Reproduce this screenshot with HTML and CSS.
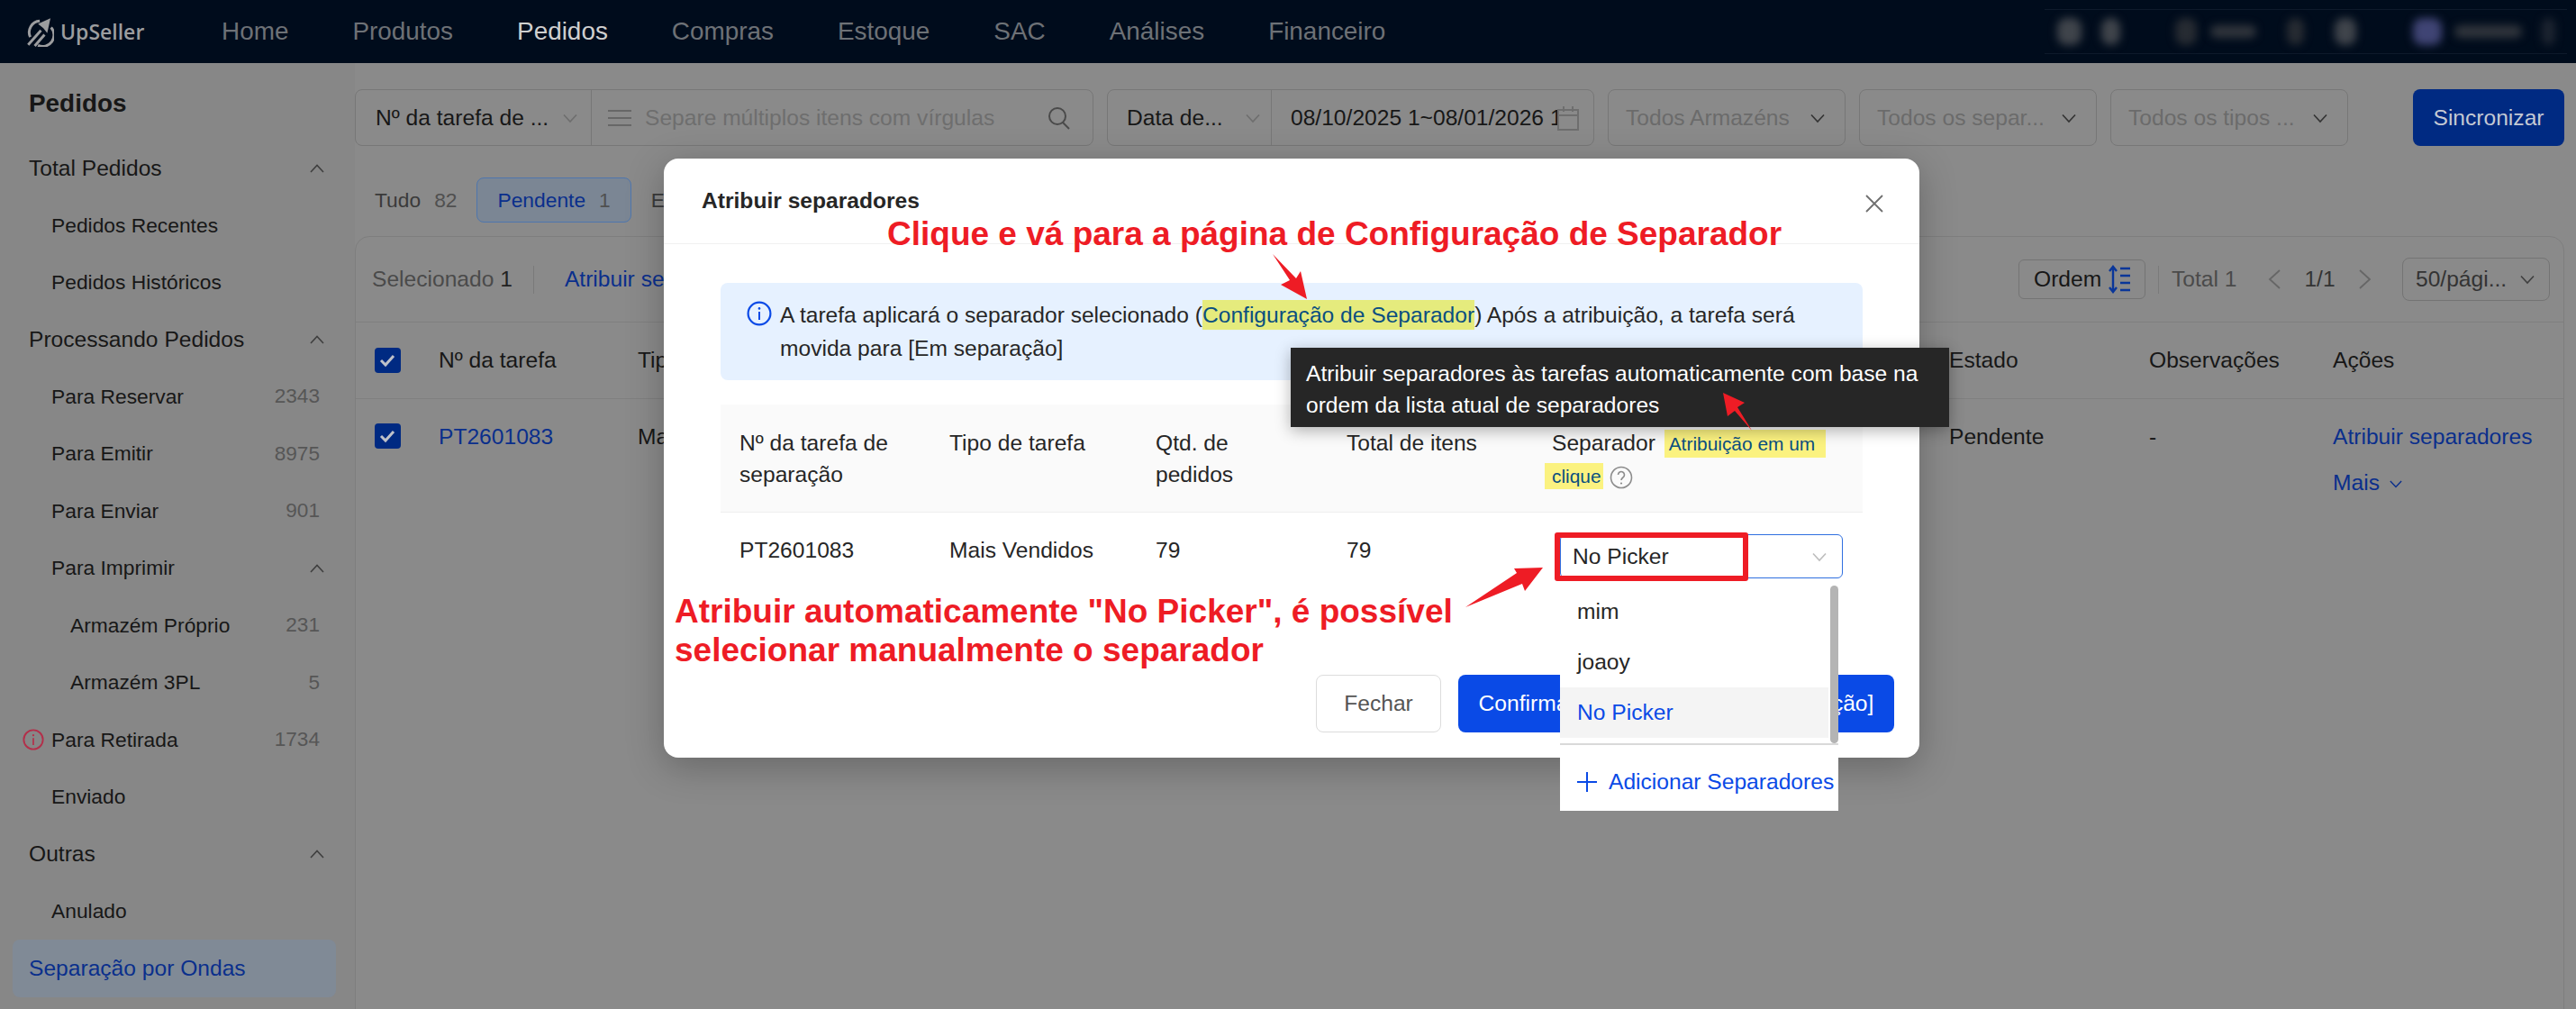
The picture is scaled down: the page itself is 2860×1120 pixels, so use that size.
FILE: index.html
```html
<!DOCTYPE html>
<html lang="pt">
  <head>
    <meta charset="utf-8">
    <title>Atribuir separadores</title>
    <link rel="stylesheet" href="styles.css">
  </head>
  <body>
    <svg class="icon-defs" width="0" height="0">
      <symbol id="chev-down" viewBox="0 0 16 16"><path d="M1 4.5 8 12l7-7.5" fill="none" stroke="currentColor" stroke-width="1.6"/></symbol>
      <symbol id="chev-up" viewBox="0 0 16 16"><path d="M1 12 8 4.5 15 12" fill="none" stroke="currentColor" stroke-width="1.6"/></symbol>
      <symbol id="chev-left" viewBox="0 0 16 24"><path d="M14 2 3 12l11 10" fill="none" stroke="currentColor" stroke-width="1.8"/></symbol>
      <symbol id="chev-right" viewBox="0 0 16 24"><path d="m2 2 11 10L2 22" fill="none" stroke="currentColor" stroke-width="1.8"/></symbol>
      <symbol id="info" viewBox="0 0 28 28"><circle cx="14" cy="14" r="12.4" fill="none" stroke="currentColor" stroke-width="2.2"/><path d="M14 12v9" stroke="currentColor" stroke-width="2"/><circle cx="14" cy="8.4" r="1.3" fill="currentColor"/></symbol>
    </svg>

    <header class="topbar">
      <div class="logo">
        <svg class="logo-mark" viewBox="20 25 100 100">
          <path d="M40 92A38 38 0 0 1 72 38M110 60A38 38 0 0 1 66 120" fill="none" stroke="currentColor" stroke-width="9"/>
          <path d="M108 29 66 48 84 62 97 79Z" fill="currentColor"/>
          <path d="M33 118 76 70M55 122 88 84" stroke="currentColor" stroke-width="9"/>
        </svg>
        <span>UpSeller</span>
      </div>
      <nav class="topnav">
        <a>Home</a>
        <a>Produtos</a>
        <a class="current">Pedidos</a>
        <a>Compras</a>
        <a>Estoque</a>
        <a>SAC</a>
        <a>Análises</a>
        <a>Financeiro</a>
      </nav>
      <div class="account">
        <i class="blob b1"></i><i class="blob b2"></i><i class="blob b3"></i><i class="blob b4"></i>
        <i class="blob b5"></i><i class="blob b6"></i><i class="blob b7"></i><i class="blob b8"></i><i class="blob b9"></i>
      </div>
    </header>

    <div class="layout">
      <aside class="sidebar">
        <h2 class="side-title">Pedidos</h2>
        <div class="menu-item">Total Pedidos <svg class="chev"><use href="#chev-up"/></svg></div>
        <div class="menu-item lv2">Pedidos Recentes</div>
        <div class="menu-item lv2">Pedidos Históricos</div>
        <div class="menu-item">Processando Pedidos <svg class="chev"><use href="#chev-up"/></svg></div>
        <div class="menu-item lv2">Para Reservar <span class="count">2343</span></div>
        <div class="menu-item lv2">Para Emitir <span class="count">8975</span></div>
        <div class="menu-item lv2">Para Enviar <span class="count">901</span></div>
        <div class="menu-item lv2">Para Imprimir <svg class="chev"><use href="#chev-up"/></svg></div>
        <div class="menu-item lv3">Armazém Próprio <span class="count">231</span></div>
        <div class="menu-item lv3">Armazém 3PL <span class="count">5</span></div>
        <div class="menu-item warn"><svg class="warn-icon"><use href="#info"/></svg>Para Retirada <span class="count">1734</span></div>
        <div class="menu-item lv2">Enviado</div>
        <div class="menu-item">Outras <svg class="chev"><use href="#chev-up"/></svg></div>
        <div class="menu-item lv2">Anulado</div>
        <div class="menu-item active">Separação por Ondas</div>
      </aside>

      <main class="content">
        <div class="filters">
          <div class="group group-search">
            <div class="part part-type">Nº da tarefa de ... <svg class="chev thin"><use href="#chev-down"/></svg></div>
            <div class="part part-input">
              <svg class="lines" viewBox="0 0 26 20"><path d="M0 2h26M0 10h26M0 18h26" stroke="currentColor" stroke-width="1.7"/></svg>
              <span class="placeholder">Separe múltiplos itens com vírgulas</span>
              <svg class="search" viewBox="0 0 26 26"><circle cx="11" cy="11" r="9" fill="none" stroke="currentColor" stroke-width="2"/><path d="m17 18 7 7" stroke="currentColor" stroke-width="2"/></svg>
            </div>
          </div>
          <div class="group group-date">
            <div class="part part-kind">Data de... <svg class="chev thin"><use href="#chev-down"/></svg></div>
            <div class="part part-range">
              <span class="range">08/10/2025 1~08/01/2026 1</span>
              <svg class="calendar" viewBox="0 0 24 28"><path d="M1 5h22v22H1zM1 11h22M7 1v6M17 1v6" fill="none" stroke="currentColor" stroke-width="2"/></svg>
            </div>
          </div>
          <div class="select">Todos Armazéns <svg class="chev"><use href="#chev-down"/></svg></div>
          <div class="select">Todos os separ... <svg class="chev"><use href="#chev-down"/></svg></div>
          <div class="select">Todos os tipos ... <svg class="chev"><use href="#chev-down"/></svg></div>
          <button class="sync">Sincronizar</button>
        </div>

        <div class="tabs">
          <div class="tab">Tudo <span class="tab-count">82</span></div>
          <div class="tab selected">Pendente <span class="tab-count">1</span></div>
          <div class="tab">Em separação</div>
        </div>

        <section class="card">
          <div class="toolbar">
            <span class="selected-count">Selecionado <b>1</b></span>
            <span class="vline first"></span>
            <a class="link">Atribuir separadores</a>
            <div class="toolbar-right">
              <div class="order">Ordem
                <svg viewBox="0 0 24 32"><path d="M5 2v28M1 7l4-5 4 5M1 25l4 5 4-5M13 4h11M13 12h11M13 20h11M13 28h11" fill="none" stroke="currentColor" stroke-width="2.4"/></svg>
              </div>
              <span class="vline"></span>
              <span class="total">Total 1</span>
              <svg class="page-arrow"><use href="#chev-left"/></svg>
              <span class="pages">1/1</span>
              <svg class="page-arrow"><use href="#chev-right"/></svg>
              <div class="per-page">50/pági... <svg class="chev"><use href="#chev-down"/></svg></div>
            </div>
          </div>
          <div class="row row-head">
            <span class="check"><svg viewBox="0 0 28 28"><path d="m7 14 5 5 9-10" fill="none" stroke="currentColor" stroke-width="3"/></svg></span>
            <span>Nº da tarefa</span>
            <span>Tipo de tarefa</span>
            <span>Estado</span>
            <span>Observações</span>
            <span>Ações</span>
          </div>
          <div class="row row-body">
            <span class="check"><svg viewBox="0 0 28 28"><path d="m7 14 5 5 9-10" fill="none" stroke="currentColor" stroke-width="3"/></svg></span>
            <a class="link">PT2601083</a>
            <span>Mais Vendidos</span>
            <span>Pendente</span>
            <span>-</span>
            <div class="actions">
              <a class="link">Atribuir separadores</a>
              <a class="link">Mais <svg class="chev small"><use href="#chev-down"/></svg></a>
            </div>
          </div>
        </section>
      </main>
    </div>

    <div class="modal">
      <div class="modal-head">
        <h3>Atribuir separadores</h3>
        <svg class="close" viewBox="0 0 20 20"><path d="m1 1 18 18M19 1 1 19" stroke="currentColor" stroke-width="1.8"/></svg>
      </div>
      <div class="modal-body">
        <div class="notice">
          <svg class="notice-icon"><use href="#info"/></svg>
          <p>A tarefa aplicará o separador selecionado (<span class="mark-link">Configuração de Separador</span>) Após a atribuição, a tarefa será movida para [Em separação]</p>
        </div>
        <div class="pick-grid pick-head">
          <span>Nº da tarefa de<br>separação</span>
          <span>Tipo de tarefa</span>
          <span>Qtd. de<br>pedidos</span>
          <span>Total de itens</span>
          <span>Separador <span class="mark mark-top">Atribuição em um</span><br><span class="mark mark-bottom">clique</span>
            <svg class="help" viewBox="0 0 26 26"><circle cx="13" cy="13" r="11.5" fill="none" stroke="currentColor" stroke-width="1.6"/><path d="M9.5 10a3.5 3.5 0 1 1 5.4 3c-1.3.9-1.9 1.5-1.9 3" fill="none" stroke="currentColor" stroke-width="1.6"/><circle cx="13" cy="19.5" r="1.1" fill="currentColor"/></svg>
          </span>
        </div>
        <div class="pick-grid pick-row">
          <span>PT2601083</span>
          <span>Mais Vendidos</span>
          <span>79</span>
          <span>79</span>
          <div class="picker">No Picker <svg class="chev thin"><use href="#chev-down"/></svg></div>
        </div>
      </div>
      <div class="modal-foot">
        <button class="btn-close">Fechar</button>
        <button class="btn-confirm">Confirmar e mover para [Em separação]</button>
      </div>

      <div class="tooltip">Atribuir separadores às tarefas automaticamente com base na ordem da lista atual de separadores</div>

      <div class="dropdown">
        <div class="options">
          <div class="option">mim</div>
          <div class="option">joaoy</div>
          <div class="option on">No Picker</div>
          <span class="scrollbar"></span>
        </div>
        <div class="add-picker">
          <svg viewBox="0 0 22 22"><path d="M11 0v22M0 11h22" stroke="currentColor" stroke-width="2"/></svg>
          Adicionar Separadores
        </div>
      </div>
    </div>

    <!-- annotations drawn on top of the screenshot -->
    <div class="notes">
      <div class="note note-top">Clique e vá para a página de Configuração de Separador</div>
      <div class="note note-left">Atribuir automaticamente "No Picker", é possível<br>selecionar manualmente o separador</div>
      <div class="red-box"></div>
      <svg class="arrows" viewBox="0 0 2860 1120">
        <polygon points="1413,282 1439,309 1444,301 1451,332 1422,316 1432,311"/>
        <polygon points="1945,478 1926,456 1918,462 1913,436 1937,447 1929,452"/>
        <polygon points="1627,674 1684,636 1681,631 1713,630 1693,656 1690,648"/>
      </svg>
    </div>
  </body>
</html>
```

FILE: styles.css
```css
* {
  box-sizing: border-box;
}

html, body {
  margin: 0;
  height: 1120px;
  overflow: hidden;
}

body {
  position: relative;
  width: 2860px;
  background: #8a8a8a;
  color: #171717;
  font-family: "Liberation Sans", Arial, sans-serif;
  font-size: 24.6px;
}

a, svg {
  flex: none;
}

.icon-defs {
  position: absolute;
}

.chev {
  width: 16px;
  height: 16px;
  color: #3f3f3f;
}

.chev.thin {
  color: #6e6e6e;
}

/* Top bar */
.topbar {
  display: flex;
  align-items: center;
  height: 70px;
  background: #000c1c;
}

.logo {
  display: flex;
  align-items: center;
  gap: 7px;
  width: 211px;
  padding-left: 27px;
  color: #9c9d9f;
  font-family: "Open Sans", sans-serif;
  font-size: 23px;
  font-weight: 600;
}

.logo-mark {
  width: 33px;
  height: 33px;
}

.topnav {
  display: flex;
  gap: 71px;
  margin-left: 35px;
  color: #6d7176;
  font-size: 27.9px;
}

.topnav .current {
  color: #cfcfcf;
}

.account {
  display: flex;
  align-items: center;
  width: 580px;
  height: 50px;
  margin-left: auto;
  margin-right: 10px;
  border-top: 1px solid #0e1a2b;
  border-bottom: 1px solid #0e1a2b;
}

.blob {
  height: 30px;
  border-radius: 10px;
  background: #3f444b;
  filter: blur(5px);
}

.b1 { width: 27px; margin-left: 14px; }
.b2 { width: 21px; margin-left: 22px; }
.b3 { width: 24px; margin-left: 61px; background: #262b32; }
.b4 { width: 51px; height: 14px; margin-left: 15px; background: #30353c; }
.b5 { width: 19px; margin-left: 34px; background: #262b32; }
.b6 { width: 24px; margin-left: 34px; }
.b7 { width: 32px; margin-left: 63px; background: #3f4474; }
.b8 { width: 75px; height: 14px; margin-left: 14px; background: #30353c; }
.b9 { width: 15px; margin-left: 22px; background: #1c2430; }

.layout {
  display: flex;
  height: 1050px;
}

/* Sidebar */
.sidebar {
  flex: none;
  width: 394px;
  padding-top: 20px;
  background: #878787;
}

.side-title {
  height: 50px;
  margin: 0 0 15px 32px;
  font-size: 27.9px;
  line-height: 50px;
}

.menu-item {
  display: flex;
  align-items: center;
  justify-content: space-between;
  height: 63.45px;
  padding: 0 34px 0 32px;
}

.menu-item.lv2, .menu-item.lv3, .menu-item.warn {
  font-size: 22.8px;
}

.menu-item.lv2 {
  padding-left: 57px;
}

.menu-item.lv3 {
  padding-left: 78px;
}

.menu-item.warn {
  padding-left: 25px;
}

.warn-icon {
  width: 24px;
  height: 24px;
  margin-right: 8px;
  color: #b32f4a;
}

.warn .count {
  margin-left: auto;
}

.menu-item .count {
  margin-right: 5px;
  color: #565656;
  font-size: 22.6px;
}

.menu-item.active {
  width: 359px;
  margin-left: 14px;
  padding-left: 18px;
  border-radius: 8px;
  background: #808a96;
  color: #0a2f8c;
}

/* Filters */
.content {
  flex: 1;
  min-width: 0;
  padding: 29px 13px 0 0;
}

.filters {
  display: flex;
  gap: 15px;
  height: 63px;
}

.group, .select {
  display: flex;
  align-items: center;
  border: 1px solid #777;
  border-radius: 8px;
}

.group-search {
  width: 820px;
}

.group-date {
  width: 541px;
}

.part {
  display: flex;
  align-items: center;
  height: 100%;
}

.part-type {
  justify-content: space-between;
  width: 262px;
  padding: 0 15px 0 22px;
  border-right: 1px solid #777;
}

.part-input {
  flex: 1;
  color: #6e6e6e;
  padding: 0 24px 0 18px;
}

.lines {
  width: 26px;
  height: 20px;
  color: #5c5c5c;
}

.placeholder {
  margin-left: 15px;
}

.search {
  width: 26px;
  height: 26px;
  margin-left: auto;
  color: #4a4a4a;
}

.part-kind {
  justify-content: space-between;
  width: 182px;
  padding: 0 12px 0 21px;
  border-right: 1px solid #777;
}

.part-range {
  flex: 1;
  min-width: 0;
  padding: 0 15px 0 21px;
}

.range {
  width: 296px;
  overflow: hidden;
  white-space: nowrap;
}

.calendar {
  width: 24px;
  height: 28px;
  color: #6e6e6e;
}

.select {
  justify-content: space-between;
  width: 264px;
  padding: 0 22px 0 19px;
  color: #6b6b6b;
}

.select .chev {
  color: #333;
}

.sync {
  width: 168px;
  margin-left: auto;
  border: 0;
  border-radius: 8px;
  background: #002a82;
  color: #c4c9d4;
  font: inherit;
}

/* Tabs */
.tabs {
  display: flex;
  height: 50px;
  margin-top: 35px;
  font-size: 22.8px;
}

.tab {
  display: flex;
  align-items: center;
  gap: 15px;
  padding: 0 22px;
  white-space: nowrap;
  color: #3a3a3a;
}

.tab-count {
  color: #505050;
}

.tab.selected {
  border: 1px solid #4f76ad;
  border-radius: 8px;
  background: #7b8694;
  color: #0a2f8c;
}

/* Order card */
.card {
  height: 860px;
  margin-top: 15px;
  border: 1px solid #7e7e7e;
  border-radius: 16px 16px 0 0;
}

.toolbar {
  display: flex;
  align-items: center;
  height: 95px;
  padding: 0 15px 0 18px;
  border-bottom: 1px solid #7f7f7f;
}

.selected-count {
  color: #4a4a4a;
}

.selected-count b {
  color: #222;
  font-weight: normal;
}

.vline {
  width: 1px;
  height: 31px;
  background: #7a7a7a;
}

.vline.first {
  margin: 0 34px 0 23px;
}

.link {
  color: #0a2f8c;
}

.toolbar-right {
  display: flex;
  align-items: center;
  margin-left: auto;
}

.order {
  display: flex;
  align-items: center;
  justify-content: space-between;
  width: 141px;
  height: 44px;
  padding: 0 16px;
  border: 1px solid #747474;
  border-radius: 6px;
}

.order svg {
  width: 24px;
  height: 32px;
  color: #0a3699;
}

.toolbar-right .vline {
  margin: 0 14px;
}

.total {
  width: 106px;
  color: #4a4a4a;
}

.page-arrow {
  width: 16px;
  height: 24px;
  color: #666;
}

.pages {
  width: 85px;
  text-align: center;
  color: #333;
}

.per-page {
  display: flex;
  align-items: center;
  justify-content: space-between;
  width: 164px;
  height: 48px;
  margin-left: 33px;
  padding: 0 16px 0 14px;
  border: 1px solid #747474;
  border-radius: 8px;
  color: #333;
}

.row {
  display: grid;
  grid-template-columns: 71px 221px 1456px 222px 204px 1fr;
  padding-left: 21px;
}

.row-head {
  align-items: center;
  height: 85px;
  border-bottom: 1px solid #7f7f7f;
}

.row-body {
  padding-top: 27px;
  line-height: 30px;
}

.check {
  display: block;
  width: 29px;
  height: 28px;
  border-radius: 4px;
  background: #002a82;
  color: #bfc2c9;
}

.check svg {
  display: block;
  width: 28px;
  height: 28px;
}

.actions {
  display: flex;
  flex-direction: column;
  gap: 21px;
}

.chev.small {
  width: 14px;
  height: 14px;
  margin-left: 4px;
  color: #0a2f8c;
}

/* Modal */
.modal {
  position: absolute;
  top: 176px;
  left: 737px;
  display: flex;
  flex-direction: column;
  width: 1394px;
  height: 665px;
  border-radius: 16px;
  background: #fff;
  color: #262626;
  box-shadow: 0 10px 40px rgba(0, 0, 0, 0.25);
}

.modal-head {
  display: flex;
  align-items: center;
  justify-content: space-between;
  flex: none;
  height: 95px;
  padding: 0 40px 0 42px;
  border-bottom: 1px solid #f0f0f0;
}

.modal-head h3 {
  margin: 0 0 1px;
  font-size: 24.6px;
}

.close {
  width: 20px;
  height: 20px;
  margin-top: 5px;
  color: #6f6f6f;
}

.modal-body {
  padding: 43px 63px 0;
}

.notice {
  display: flex;
  gap: 9px;
  height: 108px;
  padding: 17px 40px 0 29px;
  border-radius: 8px;
  background: #e6f1ff;
  line-height: 37px;
}

.notice p {
  margin: 0;
}

.notice-icon {
  width: 28px;
  height: 28px;
  margin-top: 3px;
  color: #0a4ae6;
}

.mark-link {
  padding: 3px 0;
  background: #e5eb7d;
  color: #0a4f80;
}

.pick-grid {
  display: grid;
  grid-template-columns: 233px 229px 212px 228px 1fr;
  padding-left: 21px;
}

.pick-head {
  height: 120px;
  margin-top: 27px;
  padding-top: 25px;
  border-bottom: 1px solid #eee;
  background: #fafafa;
  line-height: 35px;
}

.mark {
  font-size: 20.9px;
  background: #fbf280;
  color: #0a4f80;
}

.mark-top {
  margin-left: 3px;
  padding: 4px 12px 4px 5px;
}

.mark-bottom {
  margin-left: -8px;
  padding: 3px 2px 3px 8px;
}

.help {
  width: 26px;
  height: 26px;
  margin-left: 1px;
  vertical-align: middle;
  color: #8c8c8c;
}

.pick-row {
  padding-top: 24px;
  line-height: 35px;
}

.picker {
  display: flex;
  align-items: center;
  justify-content: space-between;
  width: 314px;
  height: 49px;
  margin-left: 9px;
  padding: 0 17px 0 13px;
  border: 1px solid #2f6fe0;
  border-radius: 6px;
}

.picker .chev {
  color: #bdbdbd;
}

.modal-foot {
  display: flex;
  justify-content: flex-end;
  gap: 19px;
  margin-top: auto;
  padding: 0 28px 28px;
}

.modal-foot button {
  height: 64px;
  border-radius: 8px;
  font: inherit;
}

.btn-close {
  width: 139px;
  border: 1px solid #dcdcdc;
  background: #fff;
  color: #555;
}

.btn-confirm {
  width: 484px;
  border: 0;
  background: #0a4ae6;
  color: #fff;
}

.tooltip {
  position: absolute;
  top: 210px;
  left: 696px;
  width: 731px;
  height: 88px;
  padding: 11px 17px;
  background: #262626;
  color: #fff;
  line-height: 35px;
  box-shadow: 0 4px 16px rgba(0, 0, 0, 0.3);
}

.dropdown {
  position: absolute;
  top: 470px;
  left: 995px;
  width: 309px;
  height: 254px;
  background: #fff;
}

.options {
  position: relative;
  height: 179px;
  padding-top: 5px;
}

.option {
  display: flex;
  align-items: center;
  height: 56px;
  margin-right: 11px;
  padding-left: 19px;
}

.option.on {
  background: #f4f4f4;
  color: #0a4ae6;
}

.scrollbar {
  position: absolute;
  top: 4px;
  right: 0;
  width: 9px;
  height: 175px;
  border-radius: 5px;
  background: #b4b4b4;
}

.add-picker {
  display: flex;
  align-items: center;
  gap: 13px;
  height: 75px;
  padding: 8px 0 0 19px;
  border-top: 2px solid #d9d9d9;
  color: #0a4ae6;
  white-space: nowrap;
}

.add-picker svg {
  width: 22px;
  height: 22px;
}

/* Annotations */
.notes {
  position: absolute;
  inset: 0;
  color: #ee1c25;
}

.note {
  position: absolute;
  font-size: 37px;
  font-weight: bold;
  white-space: nowrap;
  text-shadow: 0 0 3px rgba(255, 255, 255, 0.9);
}

.note-top {
  top: 239px;
  left: 985px;
}

.note-left {
  top: 657px;
  left: 749px;
  line-height: 43px;
}

.red-box {
  position: absolute;
  top: 591px;
  left: 1726px;
  width: 215px;
  height: 54px;
  border: 6px solid #ee1c25;
  border-radius: 3px;
}

.arrows {
  position: absolute;
  inset: 0;
  width: 2860px;
  height: 1120px;
  fill: #ee1c25;
}
```
